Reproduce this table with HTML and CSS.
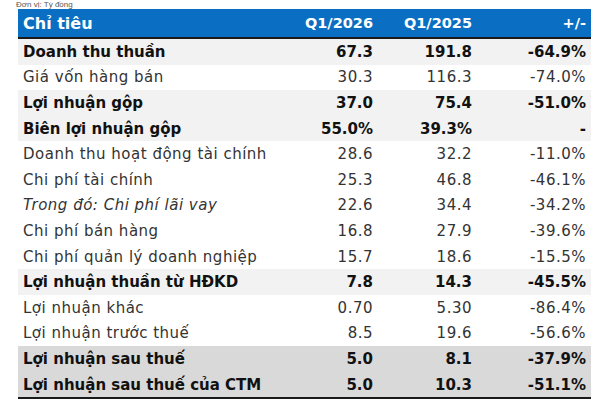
FILE: index.html
```html
<!DOCTYPE html>
<html lang="vi">
<head>
<meta charset="utf-8">
<link rel="stylesheet" href="styles.css">
</head>
<body>
<div class="wrap">
  <div class="unit">Đơn vị: Tỷ đồng</div>
  <table class="fin">
    <colgroup>
      <col class="c1"><col class="c2"><col class="c3"><col class="c4">
    </colgroup>
    <thead>
      <tr><th class="lbl">Chỉ tiêu</th><th>Q1/2026</th><th>Q1/2025</th><th>+/-</th></tr>
    </thead>
    <tbody>
      <tr class="b g1"><td>Doanh thu thuần</td><td>67.3</td><td>191.8</td><td>-64.9%</td></tr>
      <tr><td>Giá vốn hàng bán</td><td>30.3</td><td>116.3</td><td>-74.0%</td></tr>
      <tr class="b g1"><td>Lợi nhuận gộp</td><td>37.0</td><td>75.4</td><td>-51.0%</td></tr>
      <tr class="b g1"><td>Biên lợi nhuận gộp</td><td>55.0%</td><td>39.3%</td><td>-</td></tr>
      <tr><td>Doanh thu hoạt động tài chính</td><td>28.6</td><td>32.2</td><td>-11.0%</td></tr>
      <tr><td>Chi phí tài chính</td><td>25.3</td><td>46.8</td><td>-46.1%</td></tr>
      <tr><td><i>Trong đó: Chi phí lãi vay</i></td><td>22.6</td><td>34.4</td><td>-34.2%</td></tr>
      <tr><td>Chi phí bán hàng</td><td>16.8</td><td>27.9</td><td>-39.6%</td></tr>
      <tr><td>Chi phí quản lý doanh nghiệp</td><td>15.7</td><td>18.6</td><td>-15.5%</td></tr>
      <tr class="b g1"><td>Lợi nhuận thuần từ HĐKD</td><td>7.8</td><td>14.3</td><td>-45.5%</td></tr>
      <tr><td>Lợi nhuận khác</td><td>0.70</td><td>5.30</td><td>-86.4%</td></tr>
      <tr><td>Lợi nhuận trước thuế</td><td>8.5</td><td>19.6</td><td>-56.6%</td></tr>
      <tr class="b g2"><td>Lợi nhuận sau thuế</td><td>5.0</td><td>8.1</td><td>-37.9%</td></tr>
      <tr class="b g2"><td>Lợi nhuận sau thuế của CTM</td><td>5.0</td><td>10.3</td><td>-51.1%</td></tr>
    </tbody>
  </table>
</div>
</body>
</html>
```
FILE: styles.css
```css
html, body {
  margin: 0;
  padding: 0;
  background: #ffffff;
}
.wrap {
  width: 601px;
  height: 414px;
  font-family: "DejaVu Sans", "Noto Sans", sans-serif;
}
.unit {
  height: 9px;
  padding-left: 16px;
  font-family: "Liberation Sans", sans-serif;
  font-size: 8px;
  line-height: 9px;
  color: #555;
}
.fin {
  margin-left: 18px;
  width: 573px;
  border-collapse: collapse;
  table-layout: fixed;
}
.c1 { width: 262px; }
.c2 { width: 98px; }
.c3 { width: 99px; }
.c4 { width: 114px; }
.fin th {
  background: #0a6fc2;
  color: #ffffff;
  font-weight: bold;
  font-size: 14.5px;
  height: 28px;
  padding: 0 5px;
  text-align: right;
  border-bottom: 2px solid #1a1a1a;
  vertical-align: middle;
}
.fin th.lbl {
  text-align: left;
  font-size: 16px;
}
.fin td {
  height: 25.6px;
  padding: 0 5px;
  font-size: 15px;
  letter-spacing: 0.5px;
  color: #333333;
  text-align: right;
  vertical-align: middle;
  white-space: nowrap;
}
.fin td:first-child {
  text-align: left;
}
.fin tr.b td {
  font-weight: bold;
  letter-spacing: 0;
  color: #111111;
}
.fin tr.g1 td { background: #f2f2f2; }
.fin tr.g2 td { background: #d9d9d9; }
.fin tbody tr:last-child td {
  border-bottom: 2px solid #1a1a1a;
}
```
